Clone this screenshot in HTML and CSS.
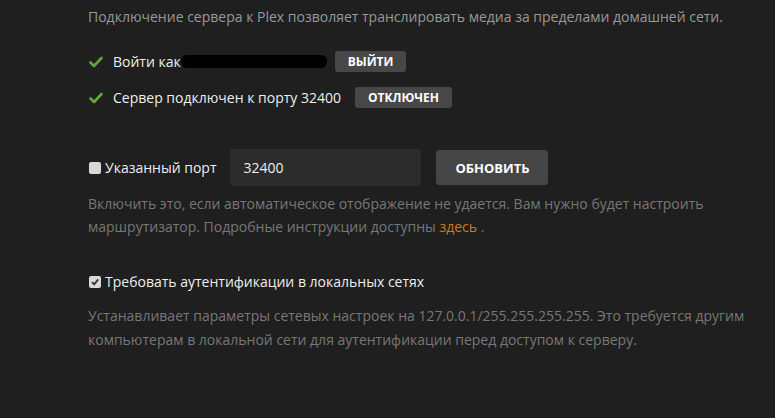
FILE: index.html
```html
<!DOCTYPE html>
<html lang="ru">
<head>
  <meta charset="UTF-8">
  <title>Удалённый доступ</title>
  <link rel="stylesheet" href="styles.css">
</head>
<body>
  <div class="settings">
    <p class="intro">Подключение сервера к Plex позволяет транслировать медиа за пределами домашней сети.</p>

    <div class="status-list">
      <div class="status-row">
        <svg class="tick" viewBox="0 0 14 12" width="14" height="12"><path d="M1.5 6.5 L5 10 L12.5 2" fill="none" stroke="#5aaa3c" stroke-width="2.6" stroke-linecap="round" stroke-linejoin="round"/></svg>
        <span>Войти как</span><span class="hidden-name"></span>
        <button class="btn-small">ВЫЙТИ</button>
      </div>
      <div class="status-row">
        <svg class="tick" viewBox="0 0 14 12" width="14" height="12"><path d="M1.5 6.5 L5 10 L12.5 2" fill="none" stroke="#5aaa3c" stroke-width="2.6" stroke-linecap="round" stroke-linejoin="round"/></svg>
        <span>Сервер подключен к порту 32400</span>
        <button class="btn-small btn-wide">ОТКЛЮЧЕН</button>
      </div>
    </div>

    <div class="port-row">
      <label class="check"><span class="box"></span>Указанный порт</label>
      <div class="port-input">32400</div>
      <button class="btn-big">ОБНОВИТЬ</button>
    </div>
    <p class="help">Включить это, если автоматическое отображение не удается. Вам нужно будет настроить маршрутизатор. Подробные инструкции доступны <a href="#">здесь</a>&nbsp;.</p>

    <div class="narrow">
      <label class="check"><span class="box checked"><svg viewBox="0 0 10 10" width="10" height="10"><path d="M2 5.2 L4.2 7.4 L8.2 2.4" fill="none" stroke="#333" stroke-width="1.8"/></svg></span>Требовать аутентификации в локальных сетях</label>
      <p class="help">Устанавливает параметры сетевых настроек на 127.0.0.1/255.255.255.255. Это требуется другим компьютерам в локальной сети для аутентификации перед доступом к серверу.</p>
    </div>
  </div>
</body>
</html>
```

FILE: styles.css
```css
html, body {
  margin: 0;
  padding: 0;
  height: 100%;
  background-color: #1f1f1f;
  font-family: "Open Sans", "Noto Sans", sans-serif;
  font-size: 14px;
  color: #eeeeee;
  overflow: hidden;
}
.settings {
  padding: 6px 0 0 88px;
}
p {
  margin: 0;
}
.intro {
  color: #999;
  line-height: 22px;
}
.status-list {
  margin-top: 23px;
  display: flex;
  flex-direction: column;
  gap: 15px;
}
.status-row {
  display: flex;
  align-items: center;
  height: 21px;
}
.tick {
  margin: 0 10px 0 1px;
}
.hidden-name {
  display: inline-block;
  width: 146px;
  height: 13px;
  margin: 0 8px 0 0;
  background: #000;
  border-radius: 6px;
}
button {
  font-family: inherit;
  border: none;
  color: #fff;
  cursor: pointer;
  font-weight: 700;
}
.btn-small {
  height: 21px;
  padding: 0 13px;
  font-size: 12px;
  background-color: #474747;
  border-radius: 3px;
}
.btn-wide {
  margin-left: 14px;
}
.port-row {
  margin-top: 41px;
  display: flex;
  align-items: center;
}
.check {
  display: flex;
  align-items: center;
  gap: 4px;
}
.box {
  width: 12px;
  height: 12px;
  background: #d9d9d9;
  border-radius: 2px;
  display: flex;
  align-items: center;
  justify-content: center;
  margin: 0 0 0 1px;
}
.port-input {
  margin-left: 14px;
  width: 178px;
  height: 37px;
  padding-left: 13px;
  line-height: 37px;
  background: #2c2c2c;
  border-radius: 3px;
}
.btn-big {
  margin-left: 15px;
  height: 35px;
  width: 112px;
  font-size: 13px;
  background-color: #464646;
  border-radius: 3px;
}
.help {
  color: #777;
  line-height: 23px;
  margin-top: 6px;
  max-width: 640px;
}
.help a {
  color: #cc7b19;
  text-decoration: none;
}
.narrow {
  margin-top: 34px;
}
.narrow .help {
  margin-top: 13px;
  line-height: 24px;
  max-width: 680px;
}
```
